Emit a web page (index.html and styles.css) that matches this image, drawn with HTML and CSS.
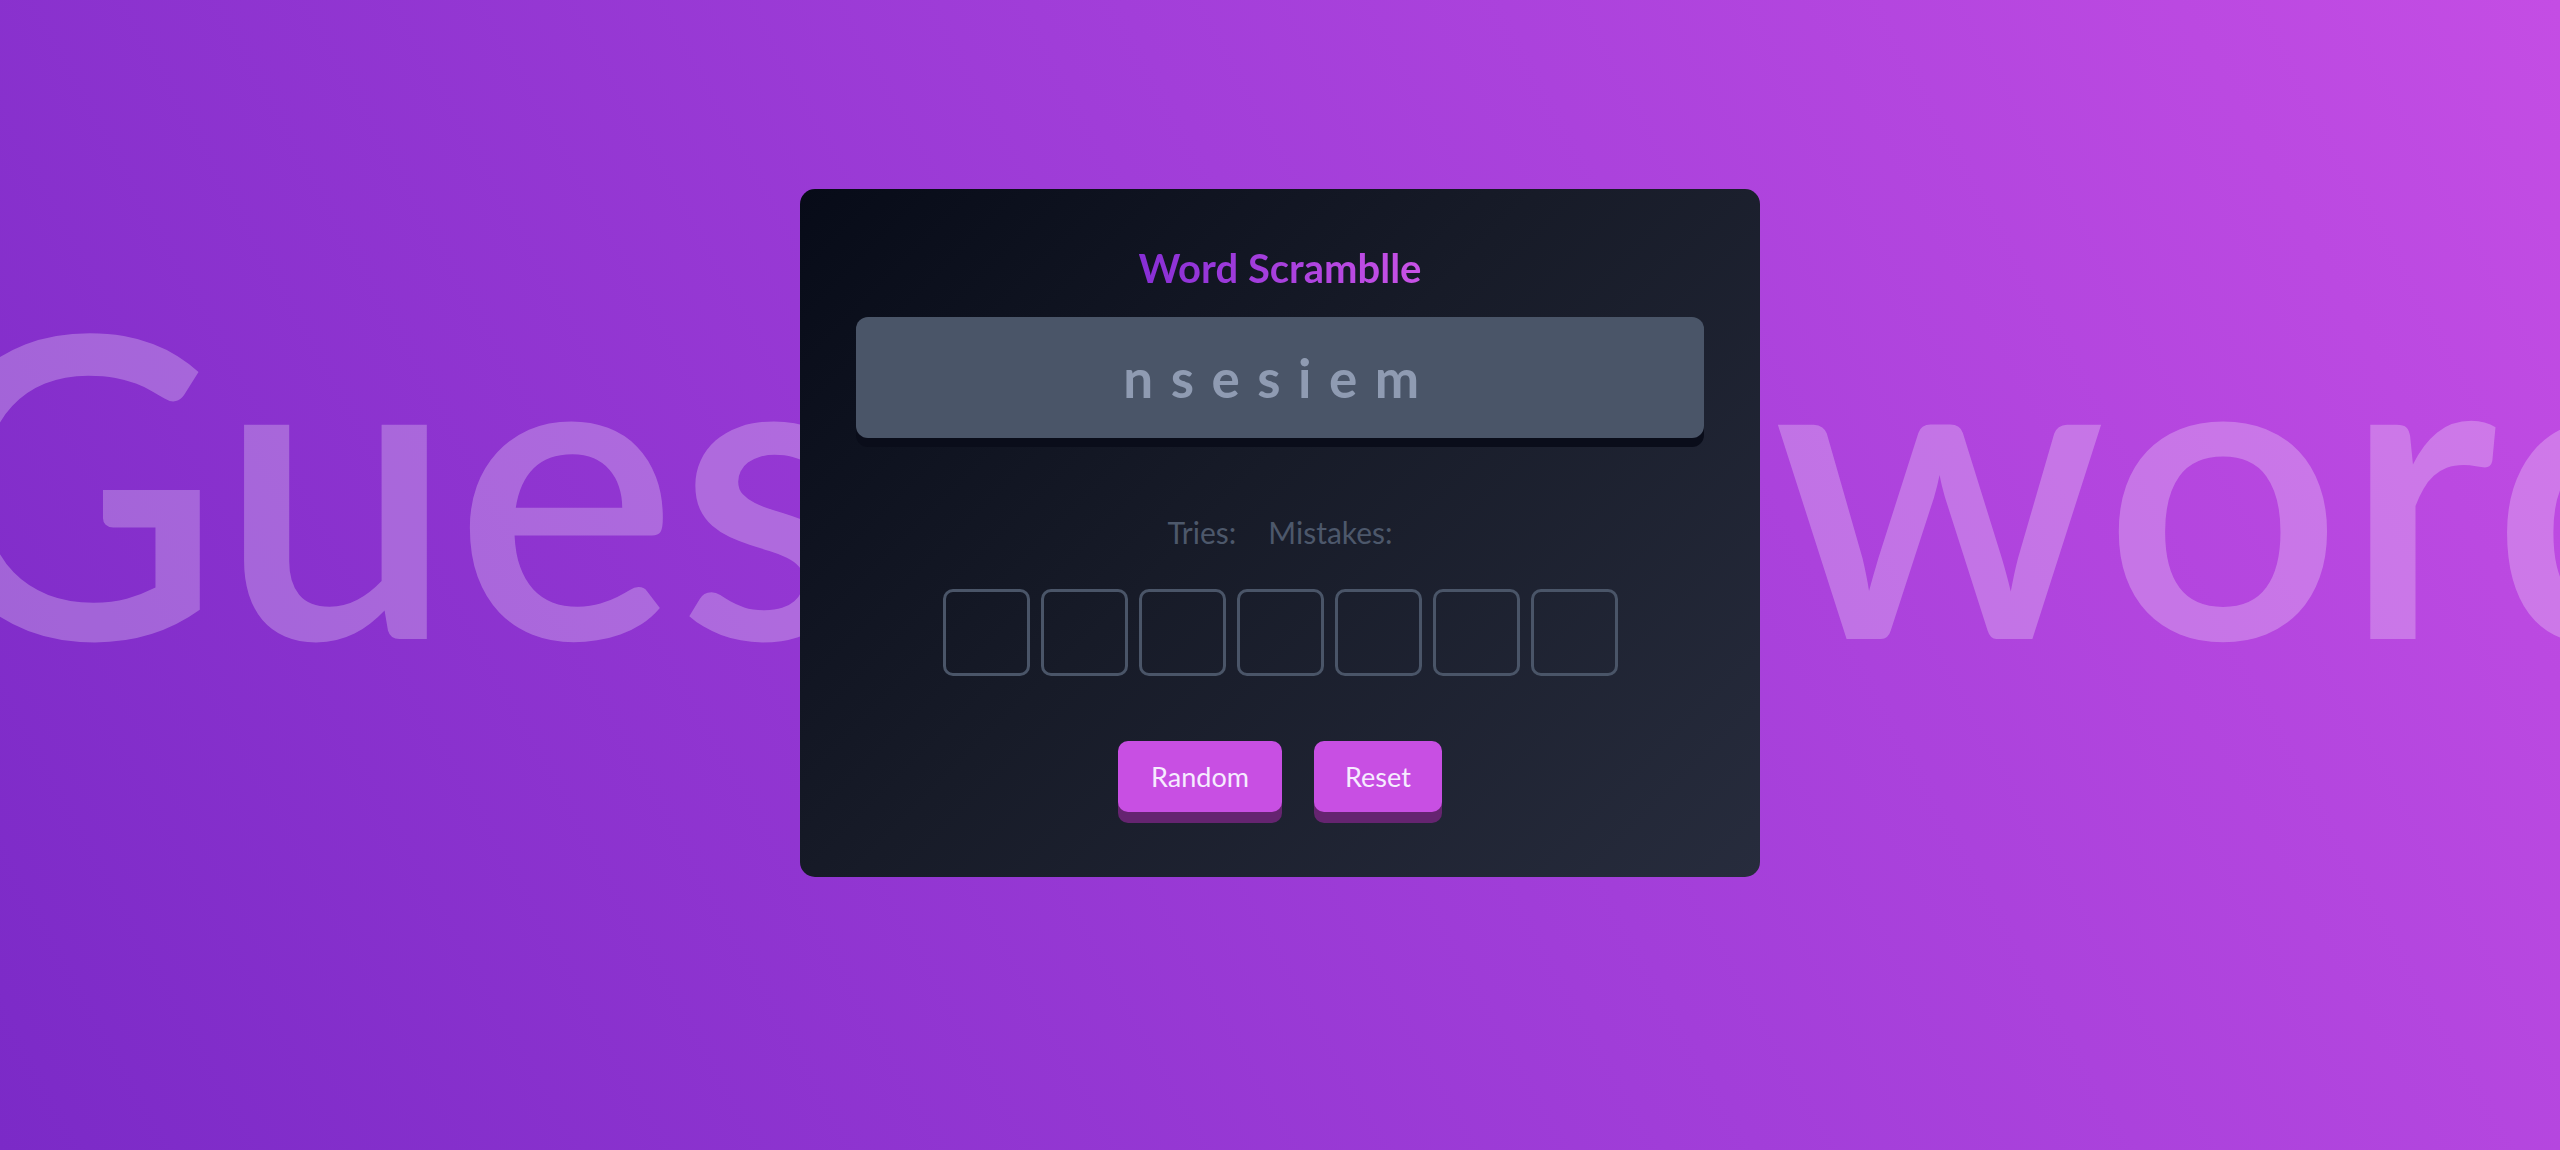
FILE: index.html
```html
<!DOCTYPE html>
<html lang="en">
<head>
<meta charset="utf-8">
<title>Word Scramblle</title>
<link rel="stylesheet" href="styles.css">
</head>
<body>
<div class="backdrop" aria-hidden="true">
  <span class="backdrop-text">Guess the word</span>
</div>
<main class="stage">
  <section class="card">
    <h1 class="title">Word Scramblle</h1>
    <div class="scramble">nsesiem</div>
    <div class="stats">
      <span>Tries:</span>
      <span>Mistakes:</span>
    </div>
    <div class="slots">
      <input class="slot" maxlength="1">
      <input class="slot" maxlength="1">
      <input class="slot" maxlength="1">
      <input class="slot" maxlength="1">
      <input class="slot" maxlength="1">
      <input class="slot" maxlength="1">
      <input class="slot" maxlength="1">
    </div>
    <div class="actions">
      <button class="btn btn-random">Random</button>
      <button class="btn btn-reset">Reset</button>
    </div>
  </section>
</main>
</body>
</html>
```
FILE: styles.css
```css
* { box-sizing: border-box; }
html, body {
  margin: 0;
  height: 100%;
}
body {
  position: relative;
  overflow: hidden;
  font-family: "Lato", "Inter", "Noto Sans", sans-serif;
  background: linear-gradient(61deg, #7b2ac7 0%, #a23ed9 55%, #c44de4 100%);
}
.backdrop {
  position: absolute;
  inset: 0;
  display: flex;
  justify-content: center;
  padding-top: 266px;
  padding-left: 84px;
  overflow: hidden;
}
.backdrop-text {
  flex: none;
  white-space: nowrap;
  font-size: 420px;
  line-height: 420px;
  font-weight: 600;
  word-spacing: -42px;
  color: rgba(255, 255, 255, 0.26);
}
.stage {
  position: relative;
  height: 100%;
  display: flex;
  align-items: flex-start;
  justify-content: center;
  padding-top: 189px;
}
.card {
  width: 960px;
  height: 688px;
  border-radius: 15px;
  padding: 55px 56px 0;
  display: flex;
  flex-direction: column;
  align-items: center;
  background: linear-gradient(135deg, #070b18 0%, #171b28 45%, #272c3d 100%);
}
.title {
  margin: 0;
  font-size: 40px;
  line-height: 48px;
  font-weight: 700;
  background: linear-gradient(to right, #872ed5, #c952e6);
  -webkit-background-clip: text;
  background-clip: text;
  color: transparent;
}
.scramble {
  margin-top: 25px;
  width: 100%;
  height: 121px;
  border-radius: 12px;
  background: #4a5568;
  box-shadow: 0 9px 0 #0a0d1a;
  display: flex;
  align-items: center;
  justify-content: center;
  font-size: 53px;
  font-weight: 700;
  letter-spacing: 17.5px;
  color: #8f9bb2;
}
.stats {
  margin-top: 75px;
  display: flex;
  gap: 32px;
  font-size: 30px;
  line-height: 38px;
  font-weight: 400;
  color: #4d586b;
}
.slots {
  margin-top: 38px;
  display: flex;
  gap: 11px;
}
.slot {
  width: 87px;
  height: 87px;
  border: 3px solid #4a5568;
  border-radius: 10px;
  background: transparent;
  outline: none;
}
.actions {
  margin-top: 65px;
  display: flex;
  gap: 32px;
}
.btn {
  height: 71px;
  padding: 0;
  border: none;
  border-radius: 10px;
  background: #c84fe3;
  box-shadow: 0 11px 0 #652470;
  color: #f6ecff;
  font-family: inherit;
  font-size: 27px;
  font-weight: 400;
}
.btn-random { width: 164px; }
.btn-reset { width: 128px; }
```
